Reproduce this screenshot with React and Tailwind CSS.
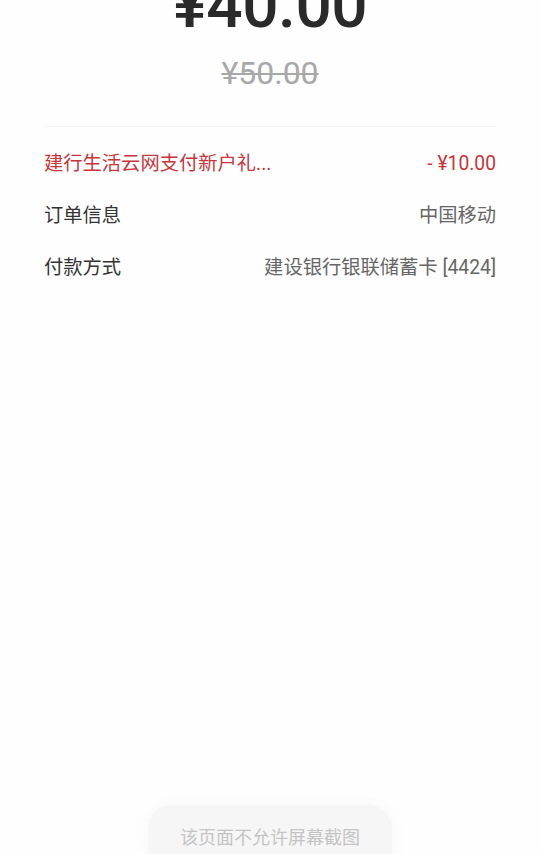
export default function App() {
  const font = { fontFamily: '"Roboto", "Noto Sans CJK SC", sans-serif' };
  return (
    <div className="relative w-[540px] h-[854px] overflow-hidden bg-[#fefefe]" style={font}>
      <div className="flex flex-col items-center">
        <div className="mt-[-34px] text-[64px] leading-[80px] font-medium text-[#2a2a2a] tracking-[-0.5px]">¥40.00</div>
        <div className="mt-[7px] text-[32px] leading-[40px] text-[#a8a8a8] line-through decoration-[2px]">¥50.00</div>
      </div>
      <div className="mx-[44px] mt-[33px] border-t border-[#f2f2f2]"></div>
      <div className="mx-[44px] mt-[11px] flex flex-col text-[19.3px]">
        <div className="h-[52px] flex items-center justify-between text-[#c8353b]">
          <span>建行生活云网支付新户礼...</span>
          <span>- ¥10.00</span>
        </div>
        <div className="h-[52px] flex items-center justify-between">
          <span className="text-[#333333]">订单信息</span>
          <span className="text-[#666666]">中国移动</span>
        </div>
        <div className="h-[52px] flex items-center justify-between">
          <span className="text-[#333333]">付款方式</span>
          <span className="text-[#666666]">建设银行银联储蓄卡 [4424]</span>
        </div>
      </div>
      <div className="absolute left-[148px] top-[805px] w-[244px] h-[80px] rounded-[24px] bg-[#f6f6f6] shadow-[0_0_16px_rgba(0,0,0,0.04)] flex justify-center pt-[20px]">
        <span className="text-[18px] leading-[26px] text-[#c4c4c4]">该页面不允许屏幕截图</span>
      </div>
    </div>
  );
}
